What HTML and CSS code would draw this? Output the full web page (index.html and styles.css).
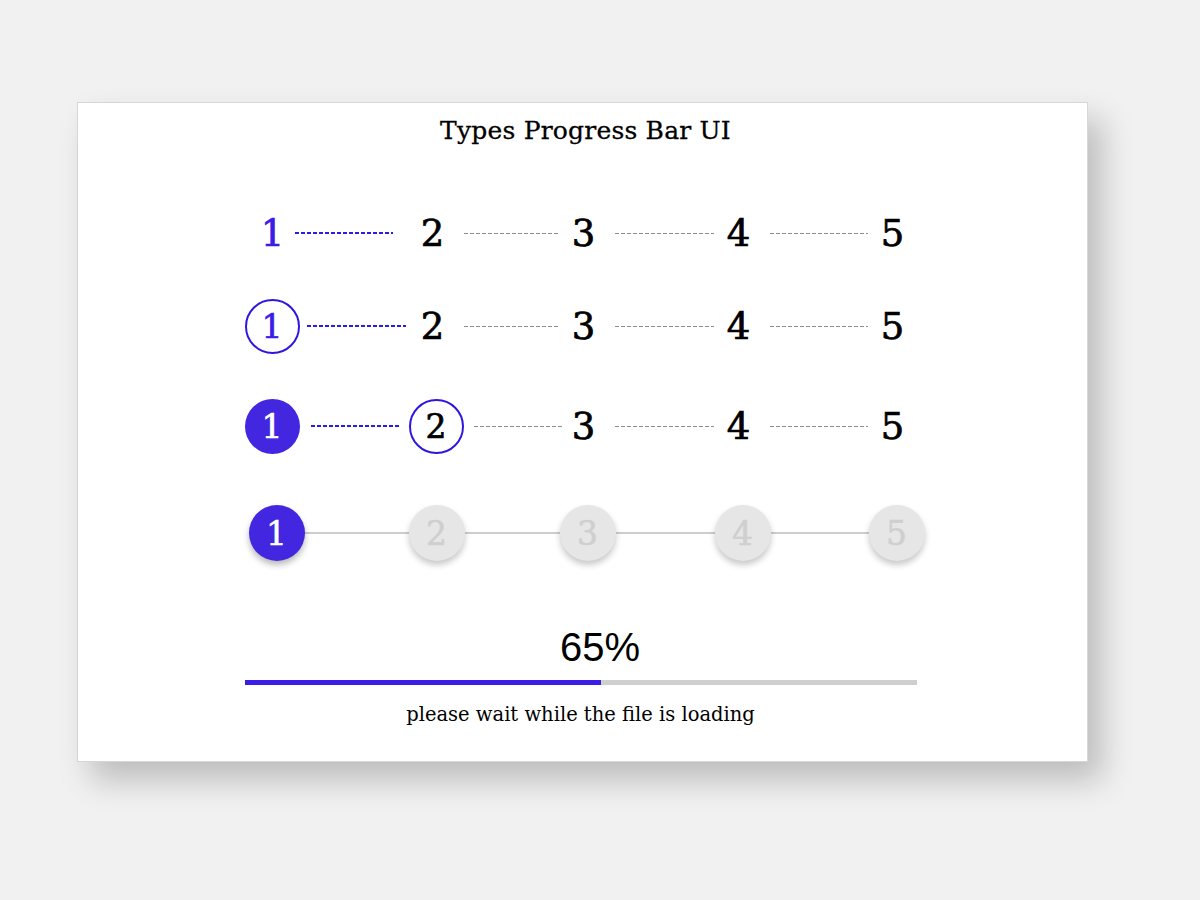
FILE: index.html
```html
<!DOCTYPE html>
<html lang="en">
<head>
<meta charset="utf-8">
<title>Types Progress Bar UI</title>
<link rel="stylesheet" href="styles.css">
</head>
<body>
<main class="card">
  <h1 class="title">Types Progress Bar UI</h1>

  <section class="steps">
    <!-- plain numbers -->
    <div class="step-row row-1">
      <span class="step active-text">1</span>
      <span class="link dashed blue"></span>
      <span class="step">2</span>
      <span class="link dashed"></span>
      <span class="step">3</span>
      <span class="link dashed"></span>
      <span class="step">4</span>
      <span class="link dashed"></span>
      <span class="step">5</span>
    </div>

    <!-- outlined current step -->
    <div class="step-row row-2">
      <span class="step ring active-text">1</span>
      <span class="link dashed blue tight"></span>
      <span class="step">2</span>
      <span class="link dashed"></span>
      <span class="step">3</span>
      <span class="link dashed"></span>
      <span class="step">4</span>
      <span class="link dashed"></span>
      <span class="step">5</span>
    </div>

    <!-- done + current -->
    <div class="step-row row-3">
      <span class="step filled">1</span>
      <span class="link dashed blue inset"></span>
      <span class="step ring">2</span>
      <span class="link dashed after-ring"></span>
      <span class="step">3</span>
      <span class="link dashed"></span>
      <span class="step">4</span>
      <span class="link dashed"></span>
      <span class="step">5</span>
    </div>

    <!-- material dots -->
    <div class="step-row row-4">
      <span class="step dot filled">1</span>
      <span class="link solid"></span>
      <span class="step dot">2</span>
      <span class="link solid"></span>
      <span class="step dot">3</span>
      <span class="link solid"></span>
      <span class="step dot">4</span>
      <span class="link solid"></span>
      <span class="step dot">5</span>
    </div>
  </section>

  <section class="loader">
    <div class="percent">65%</div>
    <div class="track"><div class="fill" style="width: 53%"></div></div>
    <p class="caption">please wait while the file is loading</p>
  </section>
</main>
</body>
</html>
```

FILE: styles.css
```css
html, body {
  margin: 0;
  padding: 0;
}

body {
  background: #f1f1f1;
  width: 1200px;
  height: 900px;
  overflow: hidden;
  font-family: "DejaVu Serif", "Liberation Serif", serif;
  color: #000;
}

.card {
  box-sizing: border-box;
  width: 1011px;
  height: 660px;
  margin: 102px 0 0 77px;
  background: #fff;
  border: 1px solid #d6d6d6;
  box-shadow: 14px 18px 30px rgba(0, 0, 0, 0.22);
  display: flex;
  flex-direction: column;
  align-items: center;
}

.title {
  margin: 13px 0 0 6px;
  font-size: 25px;
  line-height: 30px;
  font-weight: normal;
  letter-spacing: 0.2px;
  -webkit-text-stroke: 0.3px #000;
}

.steps {
  margin-top: 58px;
  width: 676px;
  display: flex;
  flex-direction: column;
}

.step-row {
  display: grid;
  grid-template-columns: 56px 104px 56px 95px 56px 99px 56px 98px 56px;
  align-items: center;
  height: 56px;
}

.row-1 { margin-top: 1px; }
.row-2 { margin-top: 37px; }
.row-3 { margin-top: 44px; }
.row-4 { margin-top: 51px; }

.step {
  box-sizing: border-box;
  width: 56px;
  height: 56px;
  display: flex;
  align-items: center;
  justify-content: center;
  font-size: 37px;
  line-height: 1;
  -webkit-text-stroke: 0.7px currentColor;
}

.active-text {
  color: #3a1ee6;
}

.ring {
  border: 2px solid #2f17e0;
  border-radius: 50%;
  width: 55px;
  height: 55px;
  font-size: 33px;
}

.filled {
  background: #4326e0;
  color: #fff;
  border-radius: 50%;
  width: 55px;
  height: 55px;
  font-size: 33px;
}

.link {
  display: block;
  height: 1px;
  margin: 0 -3px 0 3px;
}

.dashed {
  background: repeating-linear-gradient(to right, #8c8c8c 0 4px, transparent 4px 6px);
}

.dashed.blue {
  height: 2px;
  background: repeating-linear-gradient(to right, #2a1ce8 0 4px, transparent 4px 6px);
  margin-left: -6px;
  margin-right: 12px;
}

.dashed.blue.tight {
  margin-left: 6px;
  margin-right: -1px;
}

.dashed.blue.inset {
  margin-left: 10px;
  margin-right: 6px;
}

.row-3 .step.ring {
  margin-left: 4px;
}

.dashed.after-ring {
  margin-left: 13px;
  margin-right: -7px;
}

.solid {
  height: 2px;
  margin: 0 -4px;
  background: #cdcdcd;
}

.row-4 .step {
  width: 56px;
  height: 56px;
  margin-left: 4px;
  border-radius: 50%;
  font-size: 33px;
  position: relative;
  z-index: 1;
  -webkit-text-stroke: 0.5px currentColor;
}

.dot {
  background: #e6e6e6;
  color: #cfcfcf;
  box-shadow: 0 4px 6px rgba(0, 0, 0, 0.22);
}

.dot.filled {
  background: #4326e0;
  color: #fff;
  box-shadow: 0 4px 6px rgba(0, 0, 0, 0.28);
}

.loader {
  margin: 65px 0 0 -3px;
  width: 672px;
  display: flex;
  flex-direction: column;
  align-items: center;
}

.percent {
  font-family: "Liberation Sans", "DejaVu Sans", sans-serif;
  font-size: 40px;
  line-height: 42px;
  margin-left: 38px;
}

.track {
  margin-top: 12px;
  width: 100%;
  height: 5px;
  background: #cfcfcf;
}

.fill {
  height: 100%;
  background: #3a1ee6;
}

.caption {
  margin: 19px 0 0 -1px;
  font-size: 19.5px;
  line-height: 22px;
}
```
